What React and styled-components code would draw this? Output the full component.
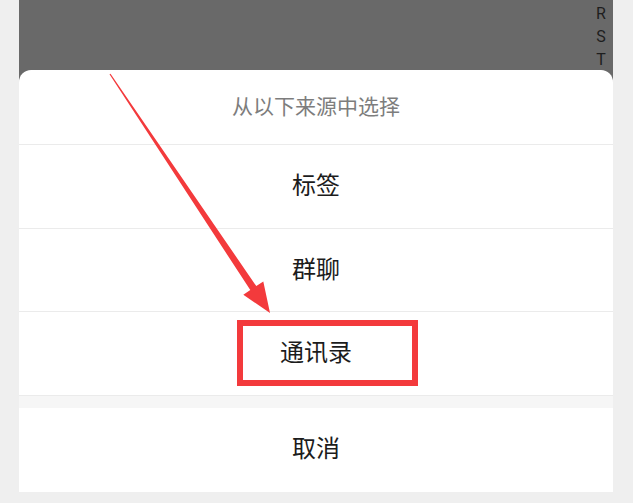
import React from "react";
import styled, { createGlobalStyle } from "styled-components";

const GlobalStyle = createGlobalStyle`
  html, body {
    margin: 0;
    padding: 0;
    background: #efefef;
    font-family: "Noto Sans CJK SC", "Noto Sans", sans-serif;
  }
`;

const Page = styled.div`
  position: relative;
  width: 633px;
  height: 503px;
  overflow: hidden;
  background: #efefef;
`;

const Frame = styled.div`
  margin-left: 19px;
  width: 594px;
  height: 492px;
  display: flex;
  flex-direction: column;
  background: #696969;
`;

const Backdrop = styled.div`
  height: 70px;
  flex: none;
  display: flex;
  justify-content: flex-end;
`;

const IndexBar = styled.div`
  display: flex;
  flex-direction: column;
  align-items: center;
  width: 14px;
  margin-right: 5px;
  padding-top: 2px;
  font-family: Roboto, "Noto Sans", sans-serif;
  font-size: 16px;
  line-height: 23px;
  color: #1e1e1e;
`;

const Sheet = styled.div`
  flex: 1;
  display: flex;
  flex-direction: column;
  background: #ffffff;
  border-radius: 12px 12px 0 0;
  overflow: hidden;
`;

const Title = styled.div`
  height: 75px;
  flex: none;
  box-sizing: border-box;
  padding-bottom: 5px;
  display: flex;
  align-items: center;
  justify-content: center;
  font-size: 21px;
  color: #7d7d7d;
  border-bottom: 1px solid #ebebeb;
`;

const Option = styled.div`
  position: relative;
  height: ${(p) => p.$h}px;
  flex: none;
  box-sizing: border-box;
  padding-bottom: 6px;
  display: flex;
  align-items: center;
  justify-content: center;
  font-size: 24px;
  color: #1c1c1c;
  border-bottom: ${(p) => (p.$last ? "none" : "1px solid #ebebeb")};
`;

const Gap = styled.div`
  height: 12px;
  flex: none;
  background: #f6f6f6;
`;

const Highlight = styled.div`
  position: absolute;
  left: 218px;
  top: 8px;
  width: 181px;
  height: 66px;
  box-sizing: border-box;
  border: 6px solid #f33a3c;
  pointer-events: none;
`;

const Annotation = styled.svg`
  position: absolute;
  left: 0;
  top: 0;
  width: 633px;
  height: 503px;
  pointer-events: none;
`;

function Arrow() {
  const sx = 110, sy = 74, tx = 270, ty = 313;
  const dx = tx - sx, dy = ty - sy;
  const len = Math.hypot(dx, dy);
  const ux = dx / len, uy = dy / len;
  const nx = -uy, ny = ux;
  const headLen = 30, headHalf = 12;
  const bx = tx - headLen * ux, by = ty - headLen * uy;
  const w0 = 0.6, w1 = 3.6;
  const pts = [
    [sx + w0 * nx, sy + w0 * ny],
    [bx + w1 * nx, by + w1 * ny],
    [bx + headHalf * nx, by + headHalf * ny],
    [tx, ty],
    [bx - headHalf * nx, by - headHalf * ny],
    [bx - w1 * nx, by - w1 * ny],
    [sx - w0 * nx, sy - w0 * ny],
  ]
    .map((p) => p.map((v) => v.toFixed(1)).join(","))
    .join(" ");
  return (
    <Annotation viewBox="0 0 633 503">
      <polygon points={pts} fill="#f33a3c" />
    </Annotation>
  );
}

export default function App() {
  return (
    <>
      <GlobalStyle />
      <Page>
        <Frame>
          <Backdrop>
            <IndexBar>
              <span>R</span>
              <span>S</span>
              <span>T</span>
            </IndexBar>
          </Backdrop>
          <Sheet>
            <Title>从以下来源中选择</Title>
            <Option $h={84}>标签</Option>
            <Option $h={83}>群聊</Option>
            <Option $h={84}>
              通讯录
              <Highlight />
            </Option>
            <Gap />
            <Option $h={83} $last>取消</Option>
          </Sheet>
        </Frame>
        <Arrow />
      </Page>
    </>
  );
}
